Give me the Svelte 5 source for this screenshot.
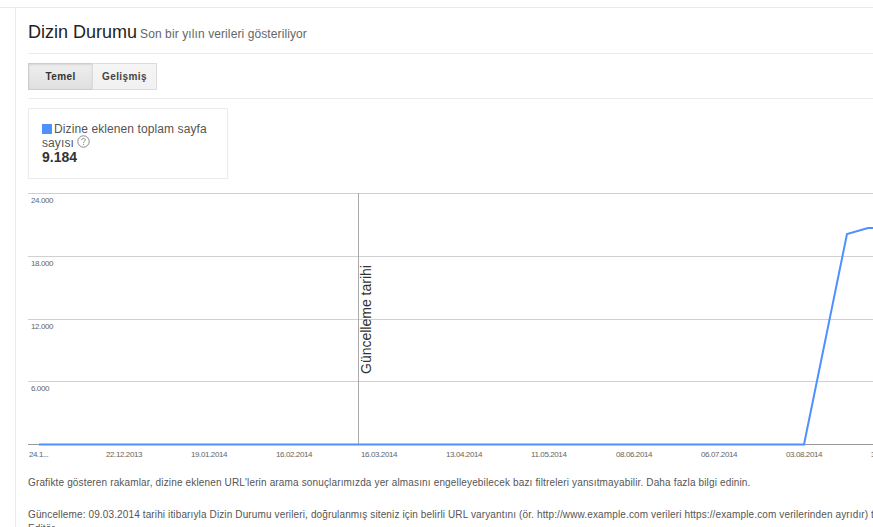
<script>
  const gridLines = [
    { y: 6.5, label: '24.000' },
    { y: 69.5, label: '18.000' },
    { y: 132.5, label: '12.000' },
    { y: 194.5, label: '6.000' }
  ];
  const dates = [
    { x: 1, text: '24.1...' },
    { x: 78, text: '22.12.2013' },
    { x: 163, text: '19.01.2014' },
    { x: 248, text: '16.02.2014' },
    { x: 333, text: '16.03.2014' },
    { x: 418, text: '13.04.2014' },
    { x: 503, text: '11.05.2014' },
    { x: 588, text: '08.06.2014' },
    { x: 673, text: '06.07.2014' },
    { x: 758, text: '03.08.2014' },
    { x: 843, text: '31.08.2014' }
  ];
</script>

<div class="frame">
  <main class="content">
    <header class="title">
      <h1>Dizin Durumu</h1>
      <span class="sub">Son bir yılın verileri gösteriliyor</span>
    </header>

    <div class="toolbar">
      <div class="tabs">
        <button class="tab active">Temel</button>
        <button class="tab">Gelişmiş</button>
      </div>
    </div>

    <div class="card">
      <div class="legend">
        <span class="swatch"></span>Dizine eklenen toplam sayfa sayısı
        <svg class="help" width="13" height="13" viewBox="0 0 13 13">
          <circle cx="6.500" cy="6.500" r="5.700" fill="none" stroke="#8a8a8a" />
          <path d="M4.700 5.100c0-1.100.8-1.700 1.800-1.700s1.800.6 1.800 1.500c0 1.400-1.800 1.400-1.800 2.900" fill="none" stroke="#8a8a8a" />
          <rect x="6" y="8.800" width="1" height="1.100" fill="#8a8a8a" />
        </svg>
      </div>
      <div class="value">9.184</div>
    </div>

    <svg class="chart" width="845" height="275" viewBox="0 0 845 275">
      {#each gridLines as line}
        <line x1="0" x2="845" y1={line.y} y2={line.y} stroke="#d0d0d0" />
        <text class="axis" x="3" y={line.y + 9}>{line.label}</text>
      {/each}
      <line x1="0" x2="845" y1="257.500" y2="257.500" stroke="#999999" />
      <line x1="330.500" x2="330.500" y1="6" y2="257" stroke="#aaaaaa" />
      <text class="note" transform="translate(343 187) rotate(-90)">Güncelleme tarihi</text>
      <polyline
        points="11,257.500 776,257.500 819,47 840,41 845,41"
        fill="none"
        stroke="#4d90fe"
        stroke-width="2"
      />
      {#each dates as d}
        <text class="axis" x={d.x} y="270">{d.text}</text>
      {/each}
    </svg>

    <p class="first">Grafikte gösteren rakamlar, dizine eklenen URL'lerin arama sonuçlarımızda yer almasını engelleyebilecek bazı filtreleri yansıtmayabilir. Daha fazla bilgi edinin.</p>
    <p class="second">Güncelleme: 09.03.2014 tarihi itibarıyla Dizin Durumu verileri, doğrulanmış siteniz için belirli URL varyantını (ör. http://www.example.com verileri https://example.com verilerinden ayrıdır) temel alacak şekilde güncellendi. Editör</p>
  </main>
</div>

<style>
  :global(body) {
    margin: 0;
    background: #fff;
    overflow: hidden;
  }
  .frame {
    box-sizing: border-box;
    width: 873px;
    height: 520px;
    margin-top: 7px;
    padding-left: 15px;
    border-top: 1px solid #ebebeb;
    overflow: hidden;
    font-family: "Liberation Sans", Arial, sans-serif;
    color: #444;
  }
  .content {
    box-sizing: border-box;
    width: 1100px;
    height: 519px;
    padding: 0 0 0 12px;
    border-left: 1px solid #ebebeb;
  }
  .title {
    display: flex;
    align-items: baseline;
    gap: 3px;
    width: 845px;
    height: 46px;
    box-sizing: border-box;
    padding-top: 12px;
    border-bottom: 1px solid #ebebeb;
    white-space: nowrap;
  }
  h1 {
    margin: 0;
    font-size: 18px;
    font-weight: 400;
    line-height: 24px;
    color: #222;
  }
  .sub {
    font-size: 12px;
    letter-spacing: 0.1px;
    color: #666;
  }
  .toolbar {
    width: 845px;
    height: 45px;
    box-sizing: border-box;
    padding-top: 9px;
    border-bottom: 1px solid #ebebeb;
  }
  .tabs {
    display: flex;
    height: 27px;
  }
  .tab {
    box-sizing: border-box;
    width: 65px;
    height: 27px;
    padding: 0;
    font: bold 10px "Liberation Sans", Arial, sans-serif;
    letter-spacing: 0.4px;
    color: #444;
    background: linear-gradient(#f5f5f5, #f1f1f1);
    border: 1px solid #dcdcdc;
  }
  .tab + .tab {
    margin-left: -1px;
  }
  .tab.active {
    color: #333;
    background: linear-gradient(#eeeeee, #e0e0e0);
    border-color: #ccc;
    box-shadow: inset 0 1px 2px rgba(0, 0, 0, 0.1);
  }
  .card {
    box-sizing: border-box;
    width: 200px;
    height: 71px;
    margin-top: 9px;
    padding: 13px 13px 0;
    border: 1px solid #ebebeb;
  }
  .legend {
    font-size: 12px;
    line-height: 14px;
    letter-spacing: 0.1px;
    color: #555;
  }
  .swatch {
    display: inline-block;
    width: 10px;
    height: 10px;
    margin-right: 2px;
    background: #4d90fe;
    vertical-align: -1px;
  }
  .help {
    vertical-align: top;
    margin-top: -1px;
  }
  .value {
    font-size: 14px;
    font-weight: bold;
    line-height: 14px;
    color: #333;
  }
  .chart {
    display: block;
    margin-top: 8px;
  }
  .axis {
    font: 8px "Liberation Sans", Arial, sans-serif;
    letter-spacing: -0.4px;
    fill: #666;
  }
  .note {
    font: 14px "Liberation Sans", Arial, sans-serif;
    fill: #333;
  }
  p {
    margin: 0;
    font-size: 10px;
    line-height: 14px;
    letter-spacing: 0.15px;
    color: #555;
    width: 1020px;
  }
  .first {
    margin-top: 14px;
  }
  .second {
    margin-top: 18px;
    letter-spacing: 0.13px;
  }
</style>
